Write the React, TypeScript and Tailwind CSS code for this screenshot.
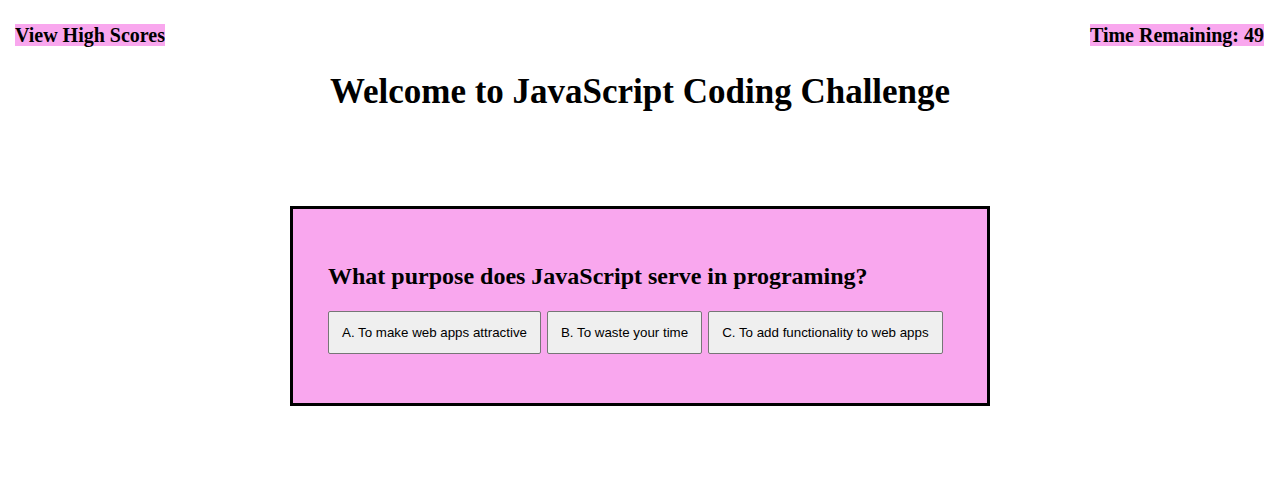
const answers = [
  "A. To make web apps attractive",
  "B. To waste your time",
  "C. To add functionality to web apps",
];

export default function App() {
  return (
    <div className="min-h-[486px] bg-white font-['Liberation_Serif',serif] text-black">
      <header className="flex justify-between pl-[15px] pr-[16px] pt-[24px]">
        <span className="inline-block h-[22px] bg-[#f9a7ee] text-[20px] font-bold leading-[22px]">
          View High Scores
        </span>
        <span className="inline-block h-[22px] bg-[#f9a7ee] text-[20px] font-bold leading-[22px]">
          Time Remaining: 49
        </span>
      </header>

      <h1 className="mt-[26px] text-center text-[35px] font-bold leading-[40px]">
        Welcome to JavaScript Coding Challenge
      </h1>

      <main className="mx-auto mt-[94px] h-[200px] w-[700px] border-[3px] border-black bg-[#f9a7ee] px-[35px] pt-[54px]">
        <h2 className="text-[24px] font-bold leading-[27px]">
          What purpose does JavaScript serve in programing?
        </h2>
        <div className="mt-[21px] flex gap-[6px]">
          {answers.map((a) => (
            <button
              key={a}
              className="h-[43px] rounded-[2px] border border-[#767676] bg-[#efefef] px-[13px] font-['Liberation_Sans',Arial,sans-serif] text-[13.33px] text-black"
            >
              {a}
            </button>
          ))}
        </div>
      </main>
    </div>
  );
}
